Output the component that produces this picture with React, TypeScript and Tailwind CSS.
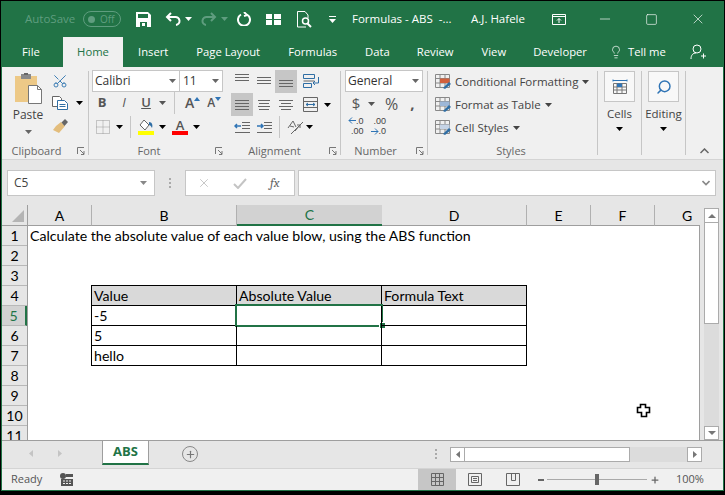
import { Lightbulb, Minus, Plus, Scissors, Search, Square, X } from "lucide-react";

const ui = "[font-family:'Open_Sans',sans-serif]";

function Caret({ className = "text-[#666]" }: { className?: string }) {
  return (
    <svg width="7" height="4" viewBox="0 0 7 4" className={className}>
      <path d="M0 0h7L3.5 4z" fill="currentColor" />
    </svg>
  );
}

function Launcher() {
  return (
    <svg width="8" height="8" viewBox="0 0 8 8" fill="none" stroke="#777">
      <path d="M.5 7V.5H7" />
      <path d="M3 3l4 4M7 4v3.5H4" />
    </svg>
  );
}

function Divider() {
  return <div className="mt-[4px] h-[84px] w-px shrink-0 bg-[#c6c6c6]" />;
}

function Group({
  label,
  width,
  launcher = false,
  children,
}: {
  label: string;
  width: string;
  launcher?: boolean;
  children: React.ReactNode;
}) {
  return (
    <div className={`flex shrink-0 flex-col ${width}`}>
      <div className="h-[76px]">{children}</div>
      <div className="flex h-[16px] items-center pr-[3px] text-[11px] text-[#666]">
        <span className={`flex-1 text-center ${launcher ? "pr-[6px]" : ""}`}>{label}</span>
        {launcher ? <Launcher /> : null}
      </div>
    </div>
  );
}

function LinesIcon({ rows, className = "" }: { rows: number[]; className?: string }) {
  return (
    <svg width="14" height="14" viewBox="0 0 14 14" stroke="#666" className={className}>
      {rows.map((r, i) => (
        <path key={i} d={`M${r} ${2.5 + i * 3}H${14 - (r === 0 ? 0 : r)}`} />
      ))}
    </svg>
  );
}

function ToolBtn({ on = false, children }: { on?: boolean; children: React.ReactNode }) {
  return (
    <div className={`flex h-[23px] w-[22px] items-center justify-center ${on ? "bg-[#c6c6c6]" : ""}`}>{children}</div>
  );
}

function ClipboardGroup() {
  return (
    <Group label="Clipboard" width="w-[86px]" launcher>
      <div className="flex pt-[6px]">
        <div className="ml-[9px] flex w-[34px] flex-col items-center">
          <svg width="29" height="31" viewBox="0 0 29 31">
            <path d="M1 3h22v26H1z" fill="#edc987" />
            <path d="M7 1h10v5H7z" fill="#8a8a8a" />
            <path d="M10 0h4v2h-4z" fill="#666" />
            <path d="M14.5 12.5h9l4 4v14h-13z" fill="#fff" stroke="#777" />
            <path d="M23.5 12.5v4h4" fill="none" stroke="#777" />
          </svg>
          <span className="mt-[3px] text-[12px] leading-[16px] text-[#444]">Paste</span>
          <Caret className="mt-[7px] text-[#666]" />
        </div>
        <div className="ml-[7px] flex flex-col">
          <Scissors size={16} strokeWidth={1.5} className="-scale-x-100 rotate-90 text-[#3f7fb5]" />
          <div className="mt-[7px] flex items-center">
            <svg width="16" height="14" viewBox="0 0 16 14" fill="#fff" stroke="#666">
              <path d="M.5.5h7l2 2v8H.5z" />
              <path d="M5.5 4.5h7l3 3v6h-10z" stroke="#2f6ea5" />
              <path d="M7.5 8.5h6M7.5 10.5h6" stroke="#2f6ea5" />
            </svg>
            <Caret className="ml-[8px]" />
          </div>
          <svg width="16" height="15" viewBox="0 0 16 15" className="mt-[9px]">
            <path d="M9 3l4 4-6 7-6-3 3-4z" fill="#e3bd7c" />
            <path d="M9.5 3.5L13 0l3 3-3.5 4z" fill="#666" />
          </svg>
        </div>
      </div>
    </Group>
  );
}

function FontGroup() {
  return (
    <Group label="Font" width="w-[137px]" launcher>
      <div className="flex flex-col pl-[3px] pt-[3px]">
        <div className="flex">
          <div className="flex h-[22px] w-[88px] items-center justify-between border border-[#c6c6c6] bg-white pl-[2px] pr-[3px] text-[12px] text-[#333]">
            Calibri
            <Caret />
          </div>
          <div className="flex h-[22px] w-[43px] items-center justify-between border border-l-0 border-[#c6c6c6] bg-white pl-[3px] pr-[3px] text-[12px] text-[#333]">
            11
            <Caret />
          </div>
        </div>
        <div className="flex h-[22px] items-center text-[#555]">
          <span className="ml-[2px] w-[16px] text-center text-[13px] font-bold">B</span>
          <span className="ml-[6px] w-[16px] text-center text-[13px] italic">I</span>
          <span className="ml-[6px] w-[16px] text-center text-[13px] font-semibold underline">U</span>
          <Caret className="ml-[5px]" />
          <div className="ml-[8px] h-[22px] w-px bg-[#c6c6c6]" />
          <span className="ml-[10px] text-[14px] font-semibold leading-none">A</span>
          <svg width="6" height="4" viewBox="0 0 6 4" className="mb-[8px]">
            <path d="M0 4l3-4 3 4z" fill="#2f74b5" />
          </svg>
          <span className="ml-[7px] text-[12px] font-semibold leading-none">A</span>
          <svg width="6" height="4" viewBox="0 0 6 4" className="mb-[8px]">
            <path d="M0 0l3 4 3-4z" fill="#2f74b5" />
          </svg>
        </div>
        <div className="mt-[1px] flex h-[23px] items-center">
          <svg width="14" height="14" viewBox="0 0 14 14" stroke="#999" strokeDasharray="1 1" className="ml-[4px]">
            <path d="M.5.5h13v13H.5zM7 .5v13M.5 7h13" fill="none" />
          </svg>
          <Caret className="ml-[6px]" />
          <div className="ml-[7px] h-[22px] w-px bg-[#c6c6c6]" />
          <div className="ml-[7px] flex flex-col items-center">
            <svg width="16" height="12" viewBox="0 0 16 12">
              <path d="M6 1l5 5-4 5-5-5z" fill="#fff" stroke="#666" />
              <path d="M11 3c3 0 4 3 3 6-1-2-2-3-3-3z" fill="#2f6ea5" />
            </svg>
            <div className="h-[4px] w-[16px] bg-[#ffff00]" />
          </div>
          <Caret className="ml-[5px]" />
          <div className="ml-[6px] flex flex-col items-center">
            <span className="h-[12px] text-[13px] font-semibold leading-[12px] text-[#555]">A</span>
            <div className="h-[4px] w-[16px] bg-[#ff0000]" />
          </div>
          <Caret className="ml-[5px]" />
        </div>
      </div>
    </Group>
  );
}

function AlignmentGroup() {
  return (
    <Group label="Alignment" width="w-[114px]" launcher>
      <div className="flex flex-col pl-[5px] pt-[3px]">
        <div className="flex items-center">
          <ToolBtn>
            <LinesIcon rows={[0, 0, 0]} className="mb-[6px]" />
          </ToolBtn>
          <ToolBtn>
            <LinesIcon rows={[0, 0, 0]} />
          </ToolBtn>
          <ToolBtn on>
            <LinesIcon rows={[0, 0, 0]} className="mt-[6px]" />
          </ToolBtn>
          <svg width="17" height="15" viewBox="0 0 17 15" fill="none" stroke="#2f6ea5" className="ml-[6px]">
            <path d="M.5.5h11v4H.5zM.5 9.5h8v4h-8z" />
            <path d="M.5 7h11" stroke="#666" />
            <path d="M15.5 3v6h-5M12 7l-2 2 2 2" />
          </svg>
        </div>
        <div className="flex items-center">
          <ToolBtn on>
            <LinesIcon rows={[0, 0, 0, 0]} />
          </ToolBtn>
          <ToolBtn>
            <LinesIcon rows={[1, 2, 1, 2]} />
          </ToolBtn>
          <ToolBtn>
            <LinesIcon rows={[0, 2, 0, 2]} />
          </ToolBtn>
          <svg width="15" height="15" viewBox="0 0 15 15" fill="none" stroke="#666" className="ml-[6px]">
            <path d="M.5.5h14v14H.5zM.5 4.5h14M.5 10.5h14" />
            <path d="M3 7.500h9M5 6l-2 1.500L5 9M10 6l2 1.500L10 9" stroke="#2f6ea5" />
          </svg>
          <Caret className="ml-[6px]" />
        </div>
        <div className="flex h-[22px] items-center">
          <svg width="16" height="11" viewBox="0 0 16 11" fill="none" stroke="#666" className="ml-[3px]">
            <path d="M8 .5h8M8 3.500h8M8 6.500h8M1 10.500h15" />
            <path d="M7 4H1M3 2L1 4l2 2" stroke="#2f74b5" strokeWidth="1.500" />
          </svg>
          <svg width="16" height="11" viewBox="0 0 16 11" fill="none" stroke="#666" className="ml-[6px]">
            <path d="M8 .5h8M8 3.500h8M8 6.500h8M1 10.500h15" />
            <path d="M1 4h6M5 2l2 2-2 2" stroke="#2f74b5" strokeWidth="1.500" />
          </svg>
          <div className="ml-[7px] h-[22px] w-px bg-[#c6c6c6]" />
          <svg width="17" height="16" viewBox="0 0 17 16" fill="none" stroke="#666" className="ml-[7px]">
            <path d="M1 9l5-7 3 6M3 7l4 1M8 12l5-6M13 6h-3M13 6v3" />
            <path d="M4 15L16 3" />
          </svg>
          <Caret className="ml-[2px]" />
        </div>
      </div>
    </Group>
  );
}

function NumberGroup() {
  return (
    <Group label="Number" width="w-[86px]" launcher>
      <div className="flex flex-col pl-[4px] pt-[3px]">
        <div className="flex h-[22px] w-[78px] items-center justify-between border border-[#c6c6c6] bg-white pl-[2px] pr-[3px] text-[12px] text-[#333]">
          General
          <Caret />
        </div>
        <div className="flex h-[23px] items-center text-[15px] text-[#555]">
          <span className="ml-[5px] w-[12px] text-center">$</span>
          <Caret className="ml-[6px]" />
          <span className="ml-[10px] text-[16px]">%</span>
          <span className="ml-[12px] font-bold">,</span>
        </div>
        <div className="flex h-[22px] items-center">
          <div className="ml-[3px] flex flex-col items-end text-[9px] leading-[10.5px] text-[#444] [font-family:'Liberation_Sans',sans-serif]">
            <span className="flex h-[10.5px] items-center">
              <svg width="8" height="7" viewBox="0 0 8 7" fill="none" stroke="#2f74b5">
                <path d="M8 3.500H1M4 .5l-3 3 3 3" />
              </svg>
              .0
            </span>
            <span className="h-[10.5px]">.00</span>
          </div>
          <div className="ml-[7px] flex flex-col items-end text-[9px] leading-[10.5px] text-[#444] [font-family:'Liberation_Sans',sans-serif]">
            <span className="h-[10.5px]">.00</span>
            <span className="flex h-[10.5px] items-center">
              <svg width="8" height="7" viewBox="0 0 8 7" fill="none" stroke="#2f74b5">
                <path d="M0 3.500h7M4 .5l3 3-3 3" />
              </svg>
              .0
            </span>
          </div>
        </div>
      </div>
    </Group>
  );
}

function StyleIcon({ accent }: { accent: string }) {
  return (
    <svg width="17" height="16" viewBox="0 0 17 16" fill="#fff" stroke="#888">
      <path d="M.5.5h14v13H.5zM.5 4.500h14M5 .5v13M10 .5v13M.5 9h14" fill="none" />
      <path d="M5 4.500h9.500V9H5z" fill={accent} stroke="none" />
      <path d="M8 14l6-6 2 2-6 5z" fill="#2f6ea5" stroke="none" />
    </svg>
  );
}

function StylesGroup() {
  const rows = [
    { label: "Conditional Formatting", accent: "#d2603c" },
    { label: "Format as Table", accent: "#9db7d8" },
    { label: "Cell Styles", accent: "#c6d4e6" },
  ];
  return (
    <Group label="Styles" width="w-[169px]">
      <div className="flex flex-col gap-[6px] pl-[7px] pt-[6px]">
        {rows.map((r) => (
          <div key={r.label} className="flex h-[17px] items-center whitespace-nowrap text-[11.5px] text-[#444]">
            <StyleIcon accent={r.accent} />
            <span className="ml-[3px]">{r.label}</span>
            <Caret className="ml-[4px]" />
          </div>
        ))}
      </div>
    </Group>
  );
}

function LargeButton({ label, children }: { label: string; children: React.ReactNode }) {
  return (
    <div className="flex w-[43px] shrink-0 flex-col items-center pt-[4px]">
      <div className="flex h-[31px] w-[31px] items-center justify-center border border-[#c6c6c6] bg-[#f8f8f8]">
        {children}
      </div>
      <span className="mt-[4px] text-[11.5px] leading-[16px] text-[#444]">{label}</span>
      <Caret className="mt-[5px]" />
    </div>
  );
}

function Ribbon() {
  return (
    <div className={`flex h-[93px] shrink-0 border-b border-[#d4d4d4] bg-[#f0f0f0] ${ui}`}>
      <ClipboardGroup />
      <Divider />
      <FontGroup />
      <AlignmentGroup />
      <Divider />
      <NumberGroup />
      <Divider />
      <StylesGroup />
      <Divider />
      <LargeButton label="Cells">
        <svg width="16" height="16" viewBox="0 0 16 16" fill="none" stroke="#777">
          <path d="M1.500 4.500h13v10h-13zM1.500 8h13M1.500 11h13M5 4.500v10M10 4.500v10" />
          <path d="M5 4.500h5V8H5z" fill="#2f74b5" stroke="none" />
          <path d="M1 1.500h14M1 .5v2M15 .5v2" stroke="#2f74b5" />
        </svg>
      </LargeButton>
      <Divider />
      <LargeButton label="Editing">
        <Search size={16} strokeWidth={2.2} className="-scale-x-100 text-[#2f74b5]" />
      </LargeButton>
      <Divider />
      <div className="flex flex-1 items-end justify-center pb-[5px]">
        <svg width="9" height="6" viewBox="0 0 9 6" fill="none" stroke="#666" strokeWidth="1.500">
          <path d="M.5 5l4-4 4 4" />
        </svg>
      </div>
    </div>
  );
}

function TitleBar() {
  return (
    <div className={`flex h-[36px] shrink-0 items-center whitespace-nowrap text-[11.5px] text-white ${ui}`}>
      <span className="ml-[23px] w-[57px] text-[#5f9d7f]">AutoSave</span>
      <div className="ml-[1px] flex h-[16px] w-[38px] items-center rounded-full border border-[#5f9d7f] pl-[4px] text-[10px] text-[#5f9d7f]">
        <div className="h-[7px] w-[7px] rounded-full bg-[#5f9d7f]" />
        <span className="ml-[5px]">Off</span>
      </div>
      <svg width="15" height="15" viewBox="0 0 15 15" className="ml-[15px]">
        <path d="M0 0h12l3 3v12H0z" fill="#fff" />
        <path d="M2 2h10v4H2z" fill="#217346" />
        <path d="M4 10h7v5H4z" fill="#217346" />
        <path d="M6 11h3v3H6z" fill="#fff" />
      </svg>
      <svg width="16" height="14" viewBox="0 0 16 14" fill="none" stroke="#fff" strokeWidth="2" className="ml-[14px]">
        <path d="M6 1L2 5l4 4M2 5h8a4 4 0 0 1 1 8" />
      </svg>
      <Caret className="ml-[4px] text-white" />
      <svg width="16" height="14" viewBox="0 0 16 14" fill="none" stroke="#5f9d7f" strokeWidth="2" className="ml-[9px]">
        <path d="M10 1l4 4-4 4M14 5H6a4 4 0 0 0-1 8" />
      </svg>
      <Caret className="ml-[4px] text-[#5f9d7f]" />
      <svg width="14" height="14" viewBox="0 0 14 14" fill="none" stroke="#fff" strokeWidth="2" className="ml-[9px]">
        <path d="M4 2.500a6 6 0 1 0 6 0M7 0l3 3-3 1" />
      </svg>
      <svg width="15" height="11" viewBox="0 0 15 11" fill="#fff" className="ml-[15px]">
        <path d="M0 0h6v5H0zM8 0h7v5H8zM0 6h6v5H0zM8 6h7v5H8z" />
      </svg>
      <svg width="15" height="17" viewBox="0 0 15 17" fill="none" stroke="#fff" className="ml-[16px]">
        <path d="M9 16H.5V.5H8L11 4v3" />
        <circle cx="8.500" cy="10" r="3" strokeWidth="1.500" />
        <path d="M10.500 12.500L14 16" strokeWidth="2" />
      </svg>
      <svg width="7" height="7" viewBox="0 0 7 7" className="ml-[17px]">
        <path d="M0 0h7v1H0zM0 3h7L3.500 7z" fill="#fff" />
      </svg>
      <span className="ml-[16px] w-[119px] whitespace-pre">Formulas - ABS  -...</span>
      <span className="w-[81px]">A.J. Hafele</span>
      <svg width="14" height="11" viewBox="0 0 14 11" fill="none" stroke="#fff">
        <path d="M.5.5h13v10H.5zM.5 2.500h13M7 9V4.500M5 6.500l2-2 2 2" />
      </svg>
      <Minus size={16} strokeWidth={1} className="ml-[31px]" />
      <Square size={13} strokeWidth={1.2} className="ml-[32px]" />
      <X size={16} strokeWidth={1} className="ml-[32px]" />
    </div>
  );
}

function TabStrip() {
  const tabs = [
    { label: "Insert", cls: "ml-[15px]" },
    { label: "Page Layout", cls: "ml-[28px]" },
    { label: "Formulas", cls: "ml-[28px]" },
    { label: "Data", cls: "ml-[28px]" },
    { label: "Review", cls: "ml-[27px]" },
    { label: "View", cls: "ml-[28px]" },
    { label: "Developer", cls: "ml-[27px]" },
  ];
  return (
    <div className={`flex h-[30px] shrink-0 items-center whitespace-nowrap text-[11.25px] text-white ${ui}`}>
      <span className="ml-[20px] w-[41px] shrink-0">File</span>
      <div className="flex h-full w-[60px] shrink-0 items-center justify-center bg-[#f0f0f0] text-[#217346]">Home</div>
      {tabs.map((t) => (
        <span key={t.label} className={`shrink-0 ${t.cls}`}>
          {t.label}
        </span>
      ))}
      <Lightbulb size={14} strokeWidth={1.2} className="ml-[22px] shrink-0" />
      <span className="ml-[5px] shrink-0">Tell me</span>
      <svg width="16" height="16" viewBox="0 0 16 16" fill="none" stroke="#fff" className="ml-[24px] shrink-0">
        <circle cx="7" cy="5" r="4" />
        <path d="M1 15c0-4 2-6 5-6M11 12h5M13.500 9.500v5" />
      </svg>
    </div>
  );
}

function FormulaBar() {
  return (
    <div className={`flex h-[45px] shrink-0 items-start bg-[#e6e6e6] pt-[10px] text-[12px] ${ui}`}>
      <div className="ml-[5px] flex h-[26px] w-[148px] items-center justify-between border border-[#c6c6c6] bg-white pl-[6px] pr-[7px] text-[#444]">
        C5
        <Caret className="text-[#888]" />
      </div>
      <div className="ml-[14px] flex h-[26px] flex-col justify-center gap-[2px]">
        <div className="h-[2px] w-[2px] bg-[#aaa]" />
        <div className="h-[2px] w-[2px] bg-[#aaa]" />
        <div className="h-[2px] w-[2px] bg-[#aaa]" />
      </div>
      <div className="ml-[14px] flex h-[26px] w-[110px] items-center border border-[#c6c6c6] bg-white">
        <X size={14} strokeWidth={1.6} className="ml-[11px] text-[#c4c4c4]" />
        <svg width="14" height="11" viewBox="0 0 14 11" fill="none" stroke="#c4c4c4" strokeWidth="2" className="ml-[22px]">
          <path d="M1 6l4 4 8-9" />
        </svg>
        <span className="ml-[23px] font-serif text-[13px] italic text-[#666]">fx</span>
      </div>
      <div className="ml-[3px] flex h-[26px] w-[418px] items-center justify-end border border-[#c6c6c6] bg-white pr-[5px]">
        <svg width="8" height="6" viewBox="0 0 8 6" fill="none" stroke="#888" strokeWidth="1.600">
          <path d="M.5 1L4 4.500 7.500 1" />
        </svg>
      </div>
    </div>
  );
}

const columns = [
  { label: "A", width: "w-[64px]", on: false },
  { label: "B", width: "w-[145px]", on: false },
  { label: "C", width: "w-[145px]", on: true },
  { label: "D", width: "w-[145px]", on: false },
  { label: "E", width: "w-[64px]", on: false },
  { label: "F", width: "w-[64px]", on: false },
  { label: "G", width: "w-[64px]", on: false },
];

function ColumnHeaders() {
  return (
    <div className="flex h-[21px] shrink-0 items-stretch overflow-hidden text-[14px] text-black">
      <div className="flex w-[26px] shrink-0 items-end justify-end border-r border-b border-[#9e9e9e] pb-[3px] pr-[3px]">
        <svg width="12" height="12" viewBox="0 0 12 12">
          <path d="M12 0v12H0z" fill="#b4b4b4" />
        </svg>
      </div>
      {columns.map((c, i) => (
        <div
          key={c.label}
          className={`flex shrink-0 items-center justify-center ${c.width} ${
            c.on
              ? "border-b-2 border-[#217346] bg-[#d2d2d2] text-[#217346]"
              : `border-b border-[#9e9e9e] ${i < columns.length - 1 ? "border-r border-r-[#b0b0b0]" : ""}`
          }`}
        >
          {c.label}
        </div>
      ))}
    </div>
  );
}

const table: Record<number, [string, string, string]> = {
  4: ["Value", "Absolute Value", "Formula Text"],
  5: ["-5", "", ""],
  6: ["5", "", ""],
  7: ["hello", "", ""],
};

function SheetRow({ n }: { n: number }) {
  const cells = table[n];
  const border = n === 3 ? "border-b border-black" : "";
  return (
    <div className="flex h-[20px] shrink-0">
      <div className="w-[63px] shrink-0 whitespace-nowrap pl-[2px] leading-[20px]">
        {n === 1 ? "Calculate the absolute value of each value blow, using the ABS function" : null}
      </div>
      {cells ? (
        <>
          {cells.map((text, i) => (
            <div
              key={i}
              className={`relative h-[20px] shrink-0 border-b border-l border-black pl-[2px] leading-[19px] ${
                i === 2 ? "w-[146px] border-r" : "w-[145px]"
              } ${n === 4 ? "bg-[#d9d9d9]" : ""}`}
            >
              {text}
              {n === 5 && i === 1 ? (
                <div className="absolute -left-[2px] -top-[2px] h-[23px] w-[148px] border-2 border-[#217346]">
                  <div className="absolute -bottom-[4px] -right-[5px] h-[7px] w-[7px] border border-white bg-[#217346]" />
                </div>
              ) : null}
            </div>
          ))}
        </>
      ) : (
        <div className={`h-[20px] w-[436px] shrink-0 ${border}`} />
      )}
    </div>
  );
}

function Sheet() {
  const rows = [1, 2, 3, 4, 5, 6, 7, 8, 9, 10, 11];
  return (
    <div className="flex h-[214px] overflow-hidden text-[14.13px] text-black">
      <div className="flex w-[26px] shrink-0 flex-col border-r border-[#9e9e9e]">
        {rows.map((n) => (
          <div
            key={n}
            className={`flex h-[20px] shrink-0 items-center justify-center border-b border-[#b8b8b8] ${
              n === 5 ? "border-r-2 border-r-[#217346] bg-[#d2d2d2] text-[#217346]" : ""
            }`}
          >
            {n}
          </div>
        ))}
      </div>
      <div className="relative flex w-[672px] shrink-0 flex-col border-r border-[#9e9e9e] bg-white">
        {rows.map((n) => (
          <SheetRow key={n} n={n} />
        ))}
        <svg width="15" height="15" viewBox="0 0 15 15" className="absolute left-[608px] top-[177px]">
          <path d="M4.500 1.500h5v3h4v5h-3v4h-5v-4h-4v-5h3z" fill="#fff" stroke="#000" strokeWidth="1.600" />
        </svg>
      </div>
    </div>
  );
}

function VerticalScroll() {
  return (
    <div className="ml-[4px] flex h-[235px] w-[15px] shrink-0 flex-col pt-[3px]">
      <div className="flex h-[15px] items-center justify-center border border-[#ababab] bg-white">
        <svg width="8" height="4" viewBox="0 0 8 4">
          <path d="M0 4l4-4 4 4z" fill="#777" />
        </svg>
      </div>
      <div className="h-[101px] border-x border-b border-[#ababab] bg-white" />
      <div className="flex-1 bg-[#dcdcdc]" />
      <div className="flex h-[14px] items-center justify-center border border-[#ababab] bg-white">
        <svg width="8" height="4" viewBox="0 0 8 4">
          <path d="M0 0l4 4 4-4z" fill="#777" />
        </svg>
      </div>
    </div>
  );
}

function SheetTabs() {
  return (
    <div className="flex h-[28px] shrink-0 items-start border-t border-[#9e9e9e] bg-[#e6e6e6]">
      <svg width="4" height="7" viewBox="0 0 4 7" className="ml-[27px] mt-[9px]">
        <path d="M4 0v7L0 3.500z" fill="#c4c4c4" />
      </svg>
      <svg width="4" height="7" viewBox="0 0 4 7" className="ml-[25px] mt-[9px]">
        <path d="M0 0v7l4-3.500z" fill="#c4c4c4" />
      </svg>
      <div className="ml-[40px] flex h-[24px] w-[47px] items-center justify-center border-x border-b-2 border-x-[#9e9e9e] border-b-[#217346] bg-white text-[13px] font-bold text-[#217346] [font-family:'Open_Sans',sans-serif]">
        ABS
      </div>
      <div className="ml-[33px] mt-[5px] flex h-[16px] w-[16px] items-center justify-center rounded-full border border-[#888]">
        <Plus size={11} strokeWidth={2.5} className="text-[#777]" />
      </div>
      <div className="ml-[237px] mt-[8px] flex flex-col gap-[2px]">
        <div className="h-[2px] w-[2px] bg-[#aaa]" />
        <div className="h-[2px] w-[2px] bg-[#aaa]" />
        <div className="h-[2px] w-[2px] bg-[#aaa]" />
      </div>
      <div className="ml-[13px] mt-[6px] flex h-[15px] w-[252px] items-stretch">
        <div className="flex w-[15px] items-center justify-center border border-[#ababab] bg-white">
          <svg width="4" height="7" viewBox="0 0 4 7">
            <path d="M4 0v7L0 3.500z" fill="#777" />
          </svg>
        </div>
        <div className="w-[165px] border border-l-0 border-[#ababab] bg-white" />
        <div className="w-[57px] bg-[#dcdcdc]" />
        <div className="flex w-[15px] items-center justify-center border border-[#ababab] bg-white">
          <svg width="4" height="7" viewBox="0 0 4 7">
            <path d="M0 0v7l4-3.500z" fill="#777" />
          </svg>
        </div>
      </div>
    </div>
  );
}

function StatusBar() {
  return (
    <div className={`flex h-[22px] shrink-0 items-center border-t border-[#d4d4d4] bg-[#f0f0f0] text-[11px] text-[#555] ${ui}`}>
      <span className="ml-[9px] w-[49px]">Ready</span>
      <svg width="13" height="13" viewBox="0 0 13 13" fill="#555">
        <circle cx="3" cy="3" r="3" />
        <path d="M6 1h7v3H6zM1 6h12v7H1z" />
        <path d="M3 7.500h2v1H3zM6 7.500h2v1H6zM9 7.500h2v1H9zM3 10h2v1H3zM6 10h2v1H6zM9 10h2v1H9z" fill="#f0f0f0" />
      </svg>
      <div className="ml-[345px] flex h-[21px] w-[38px] items-center justify-center bg-[#c6c6c6]">
        <svg width="13" height="13" viewBox="0 0 13 13" fill="none" stroke="#666">
          <path d="M.5.5h12v12H.5zM4.500.5v12M8.500.5v12M.5 4.500h12M.5 8.500h12" />
        </svg>
      </div>
      <svg width="14" height="13" viewBox="0 0 14 13" fill="none" stroke="#666" className="ml-[12px]">
        <path d="M.5.5h13v12H.5zM3.500 3.500h7v6h-7zM5 5.500h4M5 7.500h4" />
      </svg>
      <svg width="14" height="13" viewBox="0 0 14 13" fill="none" stroke="#666" className="ml-[24px]">
        <path d="M.5.5h13v12H.5zM5.500.5v7h4v-7" />
      </svg>
      <div className="ml-[18px] h-[2px] w-[6px] bg-[#666]" />
      <div className="ml-[3px] flex w-[100px] items-center">
        <div className="h-px w-[48px] bg-[#aaa]" />
        <div className="h-[11px] w-[4px] bg-[#666]" />
        <div className="h-px flex-1 bg-[#aaa]" />
      </div>
      <Plus size={10} strokeWidth={3} className="ml-[3px] text-[#666]" />
      <span className="ml-[16px]">100%</span>
    </div>
  );
}

export default function App() {
  return (
    <div className="h-[495px] w-[725px] overflow-hidden bg-black pb-[4px] pl-[1px] pr-px pt-px [font-family:Lato,sans-serif]">
      <div className="flex h-[490px] flex-col border-x border-b border-[#217346] bg-[#217346]">
        <TitleBar />
        <TabStrip />
        <Ribbon />
        <FormulaBar />
        <div className="flex h-[235px] shrink-0 bg-[#e6e6e6]">
          <div className="flex w-[698px] shrink-0 flex-col">
            <ColumnHeaders />
            <Sheet />
          </div>
          <VerticalScroll />
        </div>
        <SheetTabs />
        <StatusBar />
      </div>
    </div>
  );
}
